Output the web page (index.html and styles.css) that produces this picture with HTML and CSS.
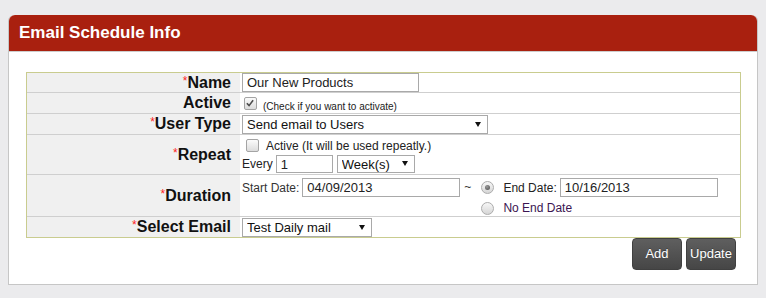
FILE: index.html
```html
<!DOCTYPE html>
<html>
<head>
<meta charset="utf-8">
<title>Email Schedule Info</title>
<link rel="stylesheet" href="styles.css">
</head>
<body>
<div class="panel">
  <div class="panel-head">Email Schedule Info</div>
  <div class="panel-body">
    <table class="form">
      <colgroup><col class="c-label"><col></colgroup>
      <tr>
        <th><span class="req">*</span>Name</th>
        <td><div class="v v-name"><input class="txt w-name" type="text" value="Our New Products"></div></td>
      </tr>
      <tr>
        <th>Active</th>
        <td><div class="v v-active"><span class="cb on"><svg viewBox="0 0 13 13" width="11" height="11"><path d="M2.2 6.2 L4.8 9 L9.6 2.6" fill="none" stroke="#4d4d4d" stroke-width="1.9"/></svg></span><span class="hint">(Check if you want to activate)</span></div></td>
      </tr>
      <tr>
        <th><span class="req">*</span>User Type</th>
        <td><div class="v v-type"><span class="sel"><select class="w-type"><option>Send email to Users</option></select></span></div></td>
      </tr>
      <tr>
        <th><span class="req">*</span>Repeat</th>
        <td>
          <div class="v v-repeat">
            <div class="rep-line1"><span class="cb"></span><span class="rep-text">Active (It will be used repeatly.)</span></div>
            <div class="rep-line2"><span class="every">Every</span><input class="txt sm w-every" type="text" value="1"><span class="sel sel-week"><select class="sm w-week"><option>Week(s)</option></select></span></div>
          </div>
        </td>
      </tr>
      <tr>
        <th><span class="req">*</span>Duration</th>
        <td>
          <div class="v v-dur">
            <span class="dlabel">Start Date:</span>
            <input class="txt w-date start" type="text" value="04/09/2013">
            <span class="tilde">~</span>
            <div class="ends">
              <div class="end-line1"><span class="rd on"></span><span class="elabel">End Date:</span><input class="txt w-date end" type="text" value="10/16/2013"></div>
              <div class="end-line2"><span class="rd"></span><span class="elabel noend">No End Date</span></div>
            </div>
          </div>
        </td>
      </tr>
      <tr>
        <th><span class="req">*</span>Select Email</th>
        <td><div class="v v-email"><span class="sel"><select class="w-email"><option>Test Daily mail</option></select></span></div></td>
      </tr>
    </table>
    <div class="actions">
      <button class="btn" type="button">Add</button>
      <button class="btn" type="button">Update</button>
    </div>
  </div>
</div>
</body>
</html>
```
FILE: styles.css
```css
* { box-sizing: border-box; }
html, body { margin: 0; }
body {
  background: #ebebed;
  font-family: "Liberation Sans", Arial, sans-serif;
  color: #222;
}
.panel {
  margin: 15px 8px 0;
  width: 750px;
  background: #fff;
  border: 1px solid #c6c6c6;
  border-top: 0;
  border-radius: 6px 6px 0 0;
}
.panel-head {
  height: 37px;
  background: #a9200f;
  color: #fff;
  font-weight: bold;
  font-size: 17px;
  line-height: 36px;
  padding-left: 10px;
  border-radius: 6px 6px 0 0;
  border-bottom: 1px solid #cdcdcd;
}
.panel-body { padding: 20px 17px 14px; }

.form {
  width: 715px;
  table-layout: fixed;
  border-collapse: separate;
  border-spacing: 0;
  border: 1px solid #c9cc8f;
}
.c-label { width: 213px; }
.form th {
  background: #f0f0f0;
  text-align: right;
  padding: 0 9px 0 0;
  font-size: 16px;
  font-weight: bold;
  color: #111;
  vertical-align: middle;
  white-space: nowrap;
}
.form td {
  padding: 0 0 0 2px;
  vertical-align: top;
  font-size: 12px;
  color: #333;
}
.form tr + tr th, .form tr + tr td { border-top: 1px solid #cfcfcf; }
.req {
  color: #f22;
  font-weight: normal;
  font-size: 12px;
  vertical-align: 3px;
}

.v { display: flex; }
.v-name { height: 19px; }
.v-active { height: 20px; }
.v-type { height: 20px; }
.v-repeat { height: 39px; flex-direction: column; }
.v-dur { height: 41px; }
.v-email { height: 20px; }

.txt {
  display: block;
  height: 19px;
  border: 1px solid #a9a9a9;
  border-radius: 0;
  padding: 0 4px;
  margin: 0;
  font: 13px "Liberation Sans", Arial, sans-serif;
  color: #222;
  background: #fff;
}
.txt.sm { height: 18px; }
.w-name { width: 177px; }
.w-every { width: 57px; margin-left: 3px; }
.w-date { width: 158px; }

.sel { position: relative; display: block; }
.sel select {
  -webkit-appearance: none;
  appearance: none;
  display: block;
  height: 19px;
  border: 1px solid #a9a9a9;
  border-radius: 0;
  background: #fff;
  padding: 0 0 0 4px;
  margin: 0;
  font: 13px "Liberation Sans", Arial, sans-serif;
  color: #111;
}
.sel select.sm { height: 18px; }
.sel::after {
  content: "";
  position: absolute;
  right: 7px;
  top: 7px;
  border-left: 3px solid transparent;
  border-right: 3px solid transparent;
  border-top: 5px solid #111;
  pointer-events: none;
}
.sel-week::after { top: 6px; }
.v-type .sel, .v-email .sel { margin-top: 1px; }
.w-type { width: 246px; }
.w-week { width: 78px; }
.w-email { width: 130px; }
.sel-week { margin-left: 4px; }

.cb {
  display: flex;
  align-items: center;
  justify-content: center;
  width: 13px;
  height: 13px;
  border: 1px solid #a4a4a4;
  border-radius: 2px;
  background: linear-gradient(#fbfbfb, #dcdcdc);
  flex: none;
}
.v-active .cb { margin: 4px 0 0 2px; }
.hint { font-size: 10px; margin: 8px 0 0 6px; color: #222; }

.rep-line1 { display: flex; align-items: center; margin-top: 4px; height: 13px; }
.rep-line1 .cb { margin-left: 4px; }
.rep-text { margin-left: 7px; margin-top: 1px; color: #222; }
.rep-line2 { display: flex; align-items: center; margin-top: 3px; height: 18px; }
.every { color: #222; }

.dlabel { margin-top: 6px; }
.start { margin: 3px 0 0 3px; }
.tilde { margin: 5px 0 0 4px; }
.ends { display: flex; flex-direction: column; margin: 3px 0 0 10px; }
.end-line1 { display: flex; align-items: center; height: 19px; }
.end-line2 { display: flex; align-items: center; height: 16px; margin-top: 3px; }
.elabel { margin-left: 9px; color: #222; }
.noend { color: #3b1552; }
.end { margin-left: 3px; }

.rd {
  width: 13px;
  height: 13px;
  border-radius: 50%;
  border: 1px solid #acacac;
  background: linear-gradient(#f7f7f7, #d6d6d6);
  display: flex;
  align-items: center;
  justify-content: center;
  flex: none;
}
.rd.on::after {
  content: "";
  width: 5px;
  height: 5px;
  border-radius: 50%;
  background: radial-gradient(circle at 40% 35%, #9a9a9a, #4a4a4a);
}

.actions {
  display: flex;
  justify-content: flex-end;
  gap: 4px;
  padding-right: 4px;
}
.btn {
  width: 50px;
  height: 32px;
  margin: 0;
  padding: 0 0 2px;
  border: 1px solid #404040;
  border-radius: 4px;
  background: linear-gradient(#5f5f5f, #464646);
  color: #fff;
  font: 13px "Liberation Sans", Arial, sans-serif;
  text-shadow: 0 -1px 0 rgba(0,0,0,0.3);
}
```
